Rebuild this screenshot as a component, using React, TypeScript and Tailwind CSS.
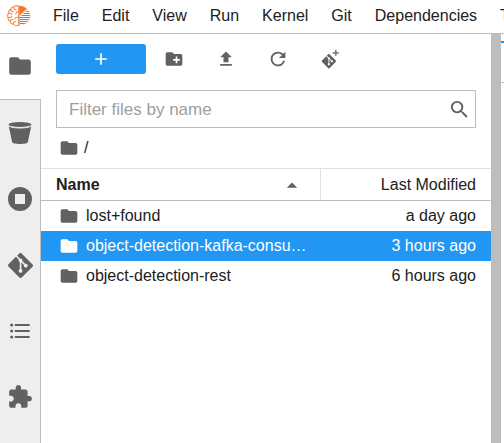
import React from 'react';

const FOLDER =
  'M10 4H4c-1.1 0-1.99.9-1.99 2L2 18c0 1.1.9 2 2 2h16c1.1 0 2-.9 2-2V8c0-1.1-.9-2-2-2h-8l-2-2z';
const GIT =
  'M23.546 10.93L13.067.452c-.604-.603-1.582-.603-2.188 0L8.708 2.627l2.76 2.76c.645-.215 1.379-.07 1.889.441.516.515.658 1.258.438 1.9l2.658 2.66c.645-.223 1.387-.078 1.9.435.721.72.721 1.884 0 2.604-.719.719-1.881.719-2.6 0-.539-.541-.674-1.337-.404-1.996L12.86 8.955v6.525c.176.086.342.203.488.348.713.721.713 1.883 0 2.6-.719.721-1.889.721-2.609 0-.719-.719-.719-1.879 0-2.598.182-.18.387-.316.605-.406V8.835c-.217-.091-.424-.222-.6-.401-.545-.545-.676-1.342-.396-2.009L7.636 3.7.45 10.881c-.6.605-.6 1.584 0 2.189l10.48 10.477c.604.604 1.582.604 2.186 0l10.43-10.43c.605-.603.605-1.582 0-2.187';

type IconProps = { className?: string; children: React.ReactNode };

function Icon({ className = 'size-5', children }: IconProps) {
  return (
    <svg viewBox="0 0 24 24" fill="currentColor" aria-hidden="true" className={`shrink-0 ${className}`}>
      {children}
    </svg>
  );
}

function BrainLogo() {
  return (
    <svg viewBox="0 0 24 22" className="h-[22px] w-6 shrink-0" fill="none" aria-hidden="true">
      <g stroke="#f58a45" strokeWidth="1.1" strokeLinecap="round" strokeLinejoin="round">
        <path d="M11.7 1.3C9.8.3 7.8.7 7 2 5.1 1.7 3.8 3 3.8 4.6 2.1 5.1 1.3 6.7 1.8 8.2.4 9.3.3 11.3 1.3 12.4c-.5 1.700.4 3.300 1.900 3.800.1 1.800 1.600 3 3.200 2.800 1 1.500 3.400 2.200 5.300 1.200z" />
        <path d="M7 2c-.3 1.500.5 2.700 2 2.800M3.800 4.600c.3 1.500 1.300 2.200 2.500 2M1.800 8.200c1.300-.6 2.700 0 3.100 1.300M11.700 6.800c-1.700-.2-2.700.5-3 2M1.300 12.400c1.200.6 2.600.2 3.200-1M11.700 12.500c-1.700-.6-3.300 0-4.100 1.400M3.200 16.200c.3-1.400 1.400-2 2.600-1.600M6.400 19c-.2-1.400.6-2.400 2-2.400" />
      </g>
      <path d="M12.200.7c3 0 5.600 1.200 7.500 3.200l-7.500 6.200z" fill="#f37726" />
      <path d="M19.700 3.900 12.200 10.600v9.800" stroke="#f58a45" strokeWidth="1" />
      <g stroke="#858585" strokeWidth="1.100">
        <path d="M18.800 6.500H22M16.500 8.500h6.300M14.300 10.500h8.900M13 12.500h10M13 14.500h9.200M13 16.500h7.700M13 18.500h5.500" />
      </g>
      <path d="M19.700 3.900c2.300 2 3.400 4.600 3.200 7.200-.2 3.800-2.900 7.300-7 8.700" stroke="#f7b48c" strokeWidth=".5" />
    </svg>
  );
}

function StorageIcon() {
  return (
    <Icon className="size-6">
      <ellipse cx="12" cy="3.500" rx="11.500" ry="2.600" />
      <path d="M.7 4.500c1 1.700 5.500 2.500 11.300 2.500s10.300-.8 11.300-2.500L19.900 21c-.3 1.300-3.500 2-7.900 2s-7.600-.7-7.900-2z" />
      <path d="M1 5c1.500 1.300 5.800 2 11 2s9.500-.7 11-2" fill="none" stroke="#eeeeee" strokeWidth="1" />
    </Icon>
  );
}

function SideTab({ label, children }: { label: string; children: React.ReactNode }) {
  return (
    <button type="button" aria-label={label} className="flex h-[66px] w-full items-center justify-center">
      {children}
    </button>
  );
}

function ToolButton({ label, children }: { label: string; children: React.ReactNode }) {
  return (
    <button type="button" aria-label={label} className="flex h-[30px] w-8 items-center justify-center">
      {children}
    </button>
  );
}

const menus = ['File', 'Edit', 'View', 'Run', 'Kernel', 'Git', 'Dependencies', 'Tabs'];

const files = [
  { name: 'lost+found', modified: 'a day ago', selected: false },
  { name: 'object-detection-kafka-consumer', modified: '3 hours ago', selected: true },
  { name: 'object-detection-rest', modified: '6 hours ago', selected: false },
];

export default function App() {
  return (
    <div className="flex h-screen flex-col overflow-hidden bg-white font-['Liberation_Sans',Arial,sans-serif] text-base text-[#212121]">
      <header className="flex h-[34px] shrink-0 items-center overflow-hidden border-b border-[#bdbdbd] pb-[2px] pl-[7px]">
        <BrainLogo />
        <nav className="ml-[22px] flex gap-[23px]">
          {menus.map((menu) => (
            <button key={menu} type="button" className="whitespace-nowrap leading-5">
              {menu}
            </button>
          ))}
        </nav>
      </header>

      <div className="flex min-h-0 flex-1">
        <aside className="flex w-[41px] shrink-0 flex-col text-[#616161]">
          <button type="button" aria-label="File Browser" className="flex h-[65px] w-10 items-center justify-center pb-[2px]">
            <Icon className="size-[26px]">
              <path d={FOLDER} />
            </Icon>
          </button>
          <div className="flex-1 border-t border-r border-[#bdbdbd] bg-[#eeeeee]">
            <SideTab label="Object Storage">
              <StorageIcon />
            </SideTab>
            <SideTab label="Running Terminals and Kernels">
              <Icon className="size-6">
                <path fillRule="evenodd" d="M12 0a12 12 0 1 0 0 24 12 12 0 0 0 0-24zM7 7h10v10H7z" />
              </Icon>
            </SideTab>
            <SideTab label="Git">
              <Icon className="size-[25px]">
                <path d={GIT} />
              </Icon>
            </SideTab>
            <SideTab label="Table of Contents">
              <Icon className="size-5">
                <circle cx="2" cy="4.800" r="1.900" />
                <circle cx="2" cy="12" r="1.900" />
                <circle cx="2" cy="19.200" r="1.900" />
                <path d="M5.800 3.600h17.800V6H5.800zM5.800 10.800h17.800v2.400H5.800zM5.800 18h17.800v2.400H5.800z" />
              </Icon>
            </SideTab>
            <SideTab label="Extension Manager">
              <Icon className="size-[26px]">
                <path d="M20.500 11H19V7c0-1.100-.9-2-2-2h-4V3.500C13 2.120 11.880 1 10.500 1S8 2.120 8 3.500V5H4c-1.100 0-1.990.9-1.990 2v3.800H3.500c1.490 0 2.700 1.210 2.700 2.700s-1.210 2.700-2.700 2.700H2V20c0 1.100.9 2 2 2h3.800v-1.500c0-1.490 1.210-2.700 2.700-2.700 1.490 0 2.700 1.210 2.700 2.700V22H17c1.100 0 2-.9 2-2v-4h1.500c1.380 0 2.500-1.120 2.500-2.500S21.880 11 20.500 11z" />
              </Icon>
            </SideTab>
          </div>
        </aside>

        <main className="flex min-w-0 flex-1 flex-col">
          <div className="flex items-center px-[15px] pt-[10px]">
            <button
              type="button"
              aria-label="New Launcher"
              className="flex h-[30px] w-[90px] items-center justify-center rounded-[3px] bg-[#2196f3] text-white"
            >
              <Icon>
                <path d="M19 13h-6v6h-2v-6H5v-2h6V5h2v6h6z" />
              </Icon>
            </button>
            <div className="ml-3 flex gap-5 text-[#616161]">
              <ToolButton label="New Folder">
                <Icon>
                  <path d="M20 6h-8l-2-2H4c-1.110 0-1.990.89-1.990 2L2 18c0 1.110.89 2 2 2h16c1.110 0 2-.89 2-2V8c0-1.110-.89-2-2-2zm-1 8h-3v3h-2v-3h-3v-2h3V9h2v3h3v2z" />
                </Icon>
              </ToolButton>
              <ToolButton label="Upload Files">
                <Icon>
                  <path d="M9 16h6v-6h4l-7-7-7 7h4zm-4 2h14v2H5z" />
                </Icon>
              </ToolButton>
              <ToolButton label="Refresh File List">
                <Icon className="size-[22px]">
                  <path d="M17.650 6.350A7.958 7.958 0 0 0 12 4a8 8 0 1 0 7.730 10h-2.080A5.990 5.990 0 0 1 12 18a6 6 0 1 1 0-12c1.660 0 3.140.69 4.220 1.780L13 11h7V4l-2.350 2.350z" />
                </Icon>
              </ToolButton>
              <ToolButton label="Git Clone">
                <Icon>
                  <g transform="translate(2 6) scale(.72)">
                    <path d={GIT} />
                  </g>
                  <path d="M17.900 1h2v2.600h2.600v2h-2.600v2.600h-2V5.600h-2.600v-2h2.600z" opacity=".8" />
                </Icon>
              </ToolButton>
            </div>
          </div>

          <div className="px-[15px] pt-4">
            <label className="flex h-[38px] items-center border border-[#bdbdbd] pr-1 pl-3 text-[#616161]">
              <input
                type="text"
                aria-label="Filter files by name"
                placeholder="Filter files by name"
                className="min-w-0 flex-1 bg-transparent pt-px text-[17px] text-[#212121] outline-none placeholder:text-[#9e9e9e]"
              />
              <Icon className="size-[23px]">
                <path d="M15.500 14h-.79l-.28-.27A6.471 6.471 0 0 0 16 9.500 6.500 6.500 0 1 0 9.500 16c1.610 0 3.090-.59 4.230-1.570l.27.28v.79l5 4.990L20.490 19l-4.990-5zm-6 0C7.010 14 5 11.990 5 9.500S7.010 5 9.500 5 14 7.010 14 9.500 11.990 14 9.500 14z" />
              </Icon>
            </label>
          </div>

          <div className="flex h-10 items-center gap-[5px] pl-[18px]">
            <button type="button" aria-label="Root folder" className="text-[#616161]">
              <Icon>
                <path d={FOLDER} />
              </Icon>
            </button>
            <span>/</span>
          </div>

          <table className="w-full table-fixed border-separate border-spacing-0">
            <thead>
              <tr className="h-[33px]">
                <th className="border-t border-b border-t-[#e0e0e0] border-b-[#bdbdbd] p-0 text-left font-bold">
                  <div className="flex h-[31px] items-center justify-between border-r border-[#e0e0e0] pr-[22px] pl-[15px]">
                    <span>Name</span>
                    <svg viewBox="0 0 12 6" className="h-[6px] w-3" fill="#616161" aria-hidden="true">
                      <path d="M.8 5.800 6 .4l5.200 5.400z" />
                    </svg>
                  </div>
                </th>
                <th className="w-[170px] border-t border-b border-t-[#e0e0e0] border-b-[#bdbdbd] p-0 pr-[15px] text-right font-normal">
                  Last Modified
                </th>
              </tr>
            </thead>
            <tbody>
              {files.map((file) => (
                <tr key={file.name} className={file.selected ? 'h-[30px] bg-[#2196f3] text-white' : 'h-[30px]'}>
                  <td className="p-0 pr-[10px] pl-[18px]">
                    <div className="flex items-center gap-[7px]">
                      <Icon className={file.selected ? 'size-5 text-white' : 'size-5 text-[#616161]'}>
                        <path d={FOLDER} />
                      </Icon>
                      <span className="truncate leading-5">{file.name}</span>
                    </div>
                  </td>
                  <td className="p-0 pr-[15px] text-right leading-5">{file.modified}</td>
                </tr>
              ))}
            </tbody>
          </table>
        </main>

        <div className="w-[10px] shrink-0 bg-[#bdbdbd]" />
        <section aria-label="Main work area" className="w-[3px] shrink-0">
          <div className="h-[7px] bg-white" />
          <div className="h-[42px] border-t-2 border-b border-t-[#2196f3] border-b-[#bdbdbd]" />
        </section>
      </div>
    </div>
  );
}
